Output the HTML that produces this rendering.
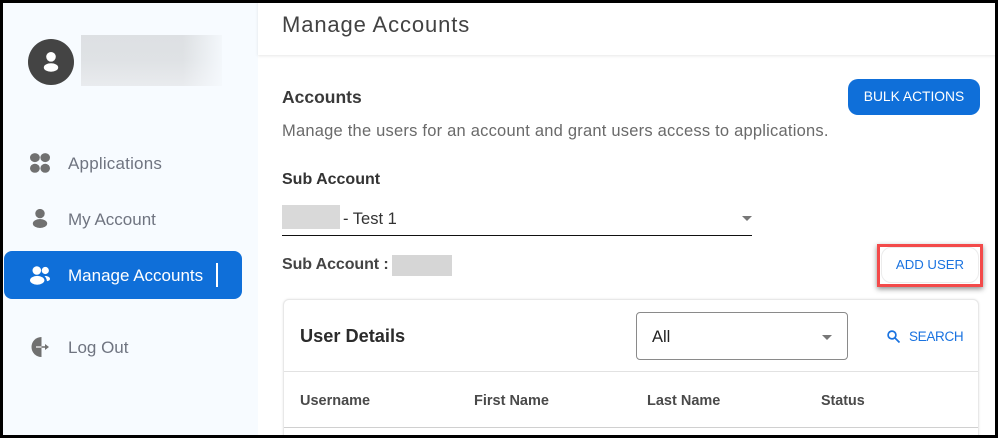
<!DOCTYPE html>
<html><head><meta charset="utf-8"><style>
html,body{margin:0;padding:0;width:998px;height:438px;overflow:hidden;background:#000}
.a{position:absolute;white-space:nowrap;font-family:"Liberation Sans",sans-serif;line-height:20px}
.frame{position:absolute;inset:0;border:solid #000;border-width:3px;pointer-events:none}
svg{position:absolute}
</style></head><body>
<div style="position:absolute;left:0;top:0;width:998px;height:438px;background:#fff;overflow:hidden">
<div class="a" style="left:0;top:0;width:258px;height:438px;background:#f7fbff"></div>
<div class="a" style="left:258px;top:0;width:740px;height:55px;background:#fff;box-shadow:0 1px 3px rgba(0,0,0,.1)"></div>

<svg style="left:28px;top:39px" width="46" height="46" viewBox="0 0 46 46"><circle cx="23" cy="23" r="23" fill="#444"/><circle cx="23" cy="17.800" r="4.800" fill="#fff"/><ellipse cx="23" cy="28.500" rx="7.200" ry="4.200" fill="#fff"/></svg>
<div class="a" style="left:81px;top:35px;width:141px;height:51px;background:linear-gradient(90deg,rgba(247,251,255,0) 0%,rgba(247,251,255,0) 72%,rgba(247,251,255,.85) 100%),linear-gradient(180deg,#dde0e3 0%,#dfe2e5 50%,#e9ebee 100%)"></div>

<svg style="left:30px;top:153px" width="20" height="20" viewBox="0 0 20 20" fill="#707070"><ellipse cx="4.900" cy="4.600" rx="4.900" ry="4.500"/><ellipse cx="15.200" cy="4.600" rx="4.800" ry="4.500"/><ellipse cx="4.900" cy="15.300" rx="4.900" ry="4.500"/><ellipse cx="15.200" cy="15.300" rx="4.800" ry="4.500"/></svg>
<div class="a" style="left:68px;top:154px;font-size:17px;color:#6f7480;letter-spacing:.2px">Applications</div>
<svg style="left:32px;top:209px" width="16" height="20" viewBox="0 0 16 20" fill="#707070"><circle cx="8" cy="4.600" r="4.700"/><ellipse cx="8" cy="14.500" rx="7.200" ry="4.500"/></svg>
<div class="a" style="left:68px;top:210px;font-size:17px;color:#6f7480">My Account</div>
<div class="a" style="left:4px;top:251px;width:238px;height:48px;background:#0f6fd9;border-radius:8px"></div>
<svg style="left:30px;top:265px" width="20" height="20" viewBox="0 0 20 20" fill="#fff"><circle cx="6.800" cy="5.500" r="4.300"/><circle cx="15.300" cy="5.500" r="3.600"/><path d="M14.500 11c3-.3 5.500 1 5.500 2.800 0 1.400-1.300 2.200-3 2.400-.3-2-1-3.800-2.500-5.200z"/><ellipse cx="7.200" cy="15.300" rx="7.200" ry="4.400"/></svg>
<div class="a" style="left:68px;top:266px;font-size:17px;color:#fff;letter-spacing:0">Manage Accounts</div>
<div class="a" style="left:216px;top:263px;width:2px;height:24px;background:#fff"></div>
<svg style="left:31px;top:337px" width="19" height="20" viewBox="0 0 19 20"><path d="M10.500 0A10 10 0 0 0 10.500 20z" fill="#707070"/><path d="M5 9.300h8.500v1.400H5z" fill="#e8e8e8"/><path d="M10.500 9.300h3.500V7l4 3-4 3v-2.300h-3.500z" fill="#707070"/></svg>
<div class="a" style="left:68px;top:338px;font-size:17px;color:#6f7480">Log Out</div>

<div class="a" style="left:282px;top:15px;font-size:22px;color:#424242;letter-spacing:.88px">Manage Accounts</div>
<div class="a" style="left:282px;top:87px;font-size:17.500px;font-weight:bold;color:#3a3a3a">Accounts</div>
<div class="a" style="left:282px;top:121px;font-size:16.500px;color:#6a6a6a;letter-spacing:.22px">Manage the users for an account and grant users access to applications.</div>
<div class="a" style="left:848px;top:79px;width:132px;height:36px;background:#0f6fd9;border-radius:10px;color:#fff;font-size:13.800px;line-height:36px;text-align:center">BULK ACTIONS</div>

<div class="a" style="left:282px;top:170px;font-size:16px;font-weight:bold;color:#333">Sub Account</div>
<div class="a" style="left:282px;top:205px;width:58px;height:24px;background:#d9d9d9"></div>
<div class="a" style="left:343px;top:209px;font-size:16.500px;color:#333">- Test 1</div>
<svg style="left:742px;top:216px" width="10" height="5"><path d="M0 0h10L5 5z" fill="#777"/></svg>
<div class="a" style="left:282px;top:235px;width:470px;height:1px;background:#111"></div>
<div class="a" style="left:282px;top:255px;font-size:16px;font-weight:bold;color:#444;letter-spacing:-.1px">Sub Account :</div>
<div class="a" style="left:392px;top:255px;width:60px;height:21px;background:#d6d6d6"></div>

<div class="a" style="left:877px;top:244px;width:106px;height:43px;box-sizing:border-box;border:3px solid #f34a4a;background:#fff;box-shadow:0 2px 5px rgba(0,0,0,.45)"></div>
<div class="a" style="left:881px;top:247px;width:98px;height:36px;box-sizing:border-box;border:1px solid #ececec;border-radius:10px;color:#1a73e0;font-size:13.200px;line-height:34px;text-align:center">ADD USER</div>

<div class="a" style="left:283px;top:299px;width:696px;height:150px;box-sizing:border-box;background:#fff;border:1px solid #e8e8e8;border-radius:6px;box-shadow:0 0 2px rgba(0,0,0,.1)"></div>
<div class="a" style="left:300px;top:326px;font-size:18.200px;font-weight:bold;color:#2b2b2b">User Details</div>
<div class="a" style="left:636px;top:312px;width:212px;height:48px;box-sizing:border-box;border:1px solid #8a8a8a;border-radius:4px"></div>
<div class="a" style="left:652px;top:327px;font-size:16.500px;color:#222">All</div>
<svg style="left:822px;top:335px" width="10" height="5"><path d="M0 0h10L5 5z" fill="#777"/></svg>
<svg style="left:887px;top:330px" width="13" height="13" viewBox="0 0 13 13" fill="none" stroke="#1a73e0" stroke-width="1.700"><circle cx="5" cy="5" r="3.900"/><path d="M8 8l4.500 4.500"/></svg>
<div class="a" style="left:909px;top:327px;font-size:13.500px;color:#1a73e0;letter-spacing:-.32px">SEARCH</div>
<div class="a" style="left:284px;top:371px;width:694px;height:1px;background:#e2e2e2"></div>
<div class="a" style="left:300px;top:391px;font-size:14.500px;font-weight:bold;color:#4a4a4a">Username</div>
<div class="a" style="left:474px;top:391px;font-size:14.500px;font-weight:bold;color:#4a4a4a">First Name</div>
<div class="a" style="left:647px;top:391px;font-size:14.500px;font-weight:bold;color:#4a4a4a">Last Name</div>
<div class="a" style="left:821px;top:391px;font-size:14.300px;font-weight:bold;color:#4a4a4a">Status</div>
<div class="a" style="left:284px;top:427px;width:694px;height:1px;background:#d0d0d0"></div>
<div class="frame"></div>
</div>
</body></html>
